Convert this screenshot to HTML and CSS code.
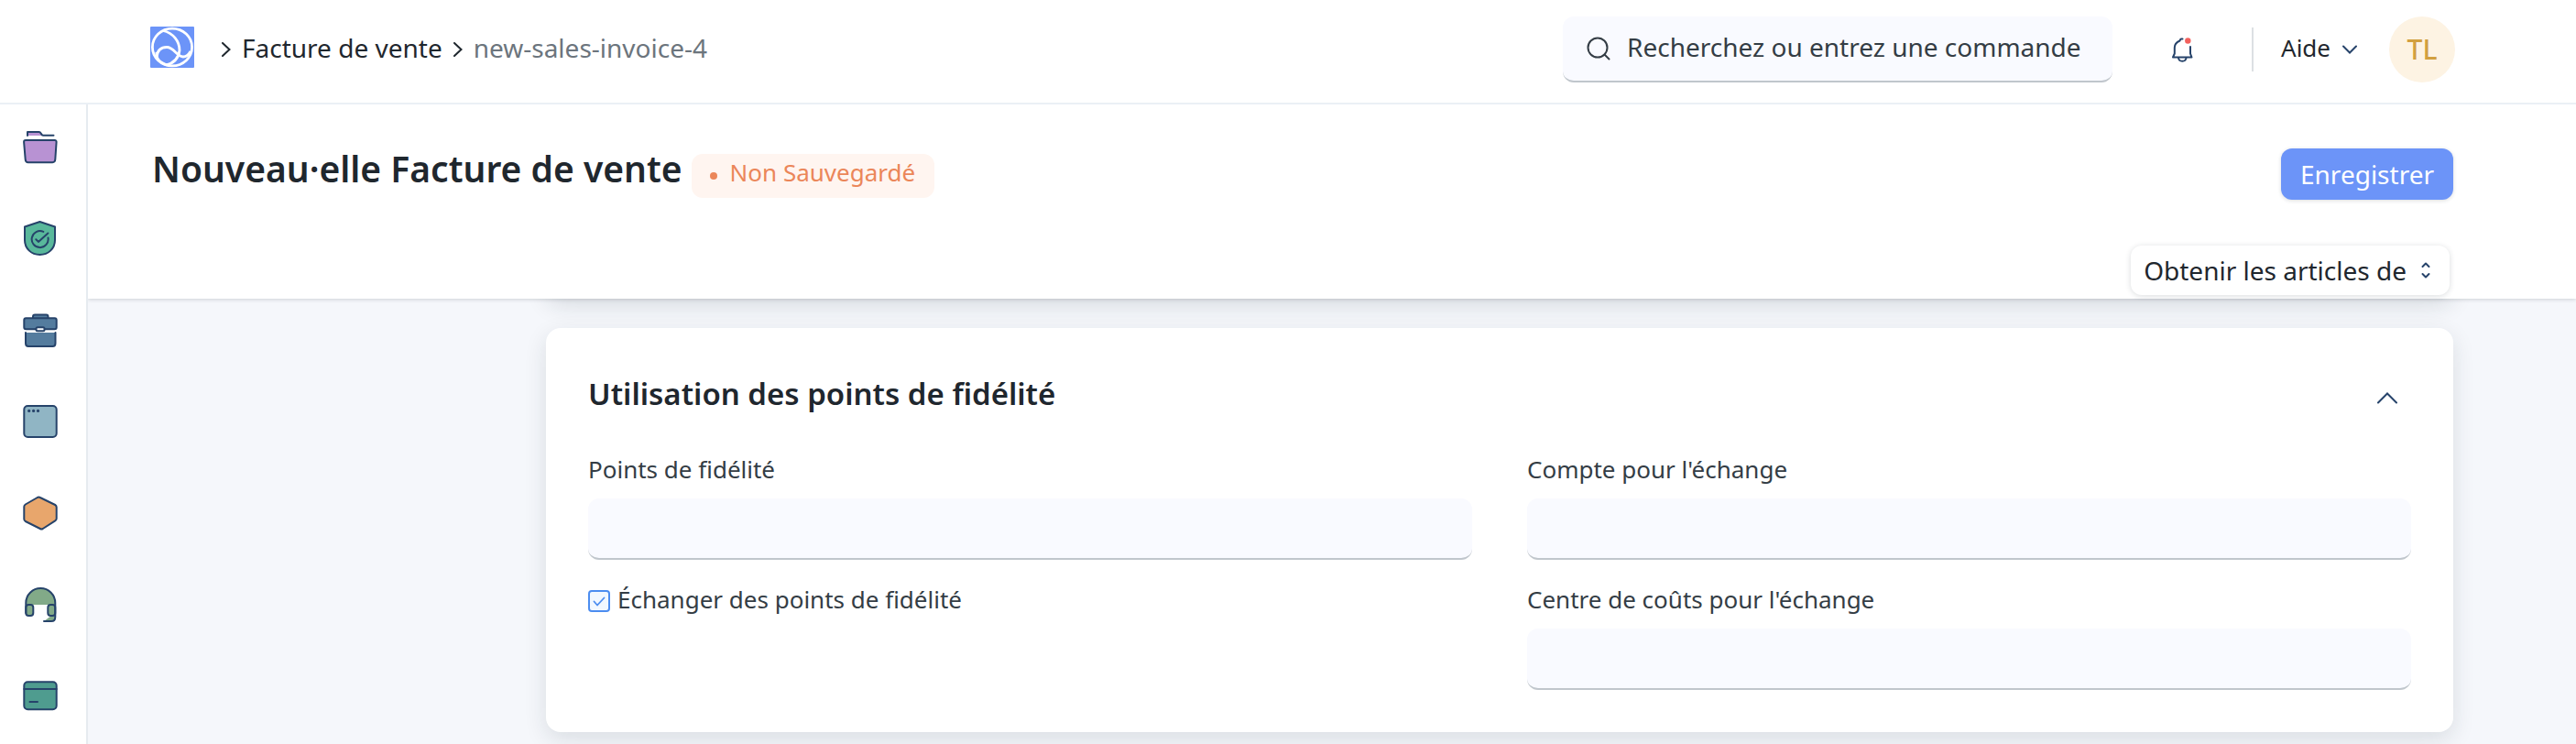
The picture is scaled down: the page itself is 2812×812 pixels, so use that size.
FILE: index.html
```html
<!DOCTYPE html>
<html lang="fr">
<head>
  <meta charset="utf-8">
  <meta name="viewport" content="width=device-width, initial-scale=1">
  <title>Nouveau·elle Facture de vente</title>
  <link rel="stylesheet" href="styles.css">
</head>
<body>
  <header class="navbar">
    <nav class="breadcrumb" aria-label="Fil d'Ariane">
      <a class="logo" href="#" aria-label="Accueil">
        <svg width="48" height="45" viewBox="0 0 48 45" fill="none" stroke="#fff" stroke-width="2.8">
          <rect width="48" height="45" rx="1" fill="#6c94f8" stroke="none"/>
          <ellipse cx="24" cy="22.5" rx="21.6" ry="20.4"/>
          <path d="M14 4.5C25 7 32 16 32 26C31 34 26 40 17 42"/>
          <path d="M7 33C8 25 13 22.500 18 22.500C26 22.500 29 33 36 33C40 33 42 30.500 44 27"/>
          <path d="M7 28C6 34 9 39 19 42"/>
        </svg>
      </a>
      <svg class="crumb-sep" width="10" height="16" viewBox="0 0 10 16"><path d="M1 1l7.500 7L1 15"/></svg>
      <a class="crumb" href="#">Facture de vente</a>
      <svg class="crumb-sep" width="10" height="16" viewBox="0 0 10 16"><path d="M1 1l7.500 7L1 15"/></svg>
      <a class="crumb crumb-current" href="#" aria-current="page">new-sales-invoice-4</a>
    </nav>
    <div class="navbar-tools">
      <div class="search">
        <svg width="26" height="26" viewBox="0 0 26 26" fill="none" stroke="#343d45" stroke-width="2" stroke-linecap="round"><circle cx="12" cy="12" r="10.500"/><path d="M19.500 19.500l5 5"/></svg>
        <input class="search-input" type="text" aria-label="Recherche" placeholder="Recherchez ou entrez une commande">
      </div>
      <button class="icon-button bell" type="button" aria-label="Notifications">
        <svg width="32" height="32" viewBox="0 0 32 32" fill="none" stroke="#26436a" stroke-width="2" stroke-linecap="round" stroke-linejoin="round">
          <path d="M18.500 4.500H17c-1 0-1 1-1.500 2C12 8 9.800 10.500 9.800 14v6.500L8 24.500h20.500L27 20.500v-7.500"/>
          <path d="M14 25c.5 5 8 5 8.500 0"/>
          <circle cx="24.300" cy="6.500" r="3.200" fill="#f2605c" stroke="none"/>
        </svg>
      </button>
      <span class="divider"></span>
      <button class="help" type="button">
        <span class="help-label">Aide</span>
        <svg width="18" height="12" viewBox="0 0 18 12" fill="none" stroke="#26436a" stroke-width="2" stroke-linecap="round"><path d="M2 2.500l7 7 7-7"/></svg>
      </button>
      <button class="avatar" type="button">TL</button>
    </div>
  </header>

  <div class="layout">
    <nav class="sidebar" aria-label="Modules">
      <a class="module" href="#" aria-label="Projets">
        <svg width="40" height="40" viewBox="0 0 40 40" class="glyph">
          <path fill="#b892d3" stroke="none" d="M6 8V4h13.700l2.600 4z"/>
          <path fill="none" d="M6 8V4h12.500c1.200 0 1.700.6 2.300 1.700.6 1.200 1 2 2.200 2h11.500"/>
          <path fill="#b892d3" d="M4 13h31.700c1.400 0 2 .8 1.900 2L36.300 34c-.1 2-1 3.200-3 3.200H6.700c-2 0-2.900-1.200-3-3.200L2.100 15c-.1-1.200.6-2 1.900-2z"/>
        </svg>
      </a>
      <a class="module" href="#" aria-label="Qualité">
        <svg width="40" height="40" viewBox="0 0 40 40" class="glyph">
          <path fill="#59b89b" d="M19.500 2L36 7.500V22c0 9-7 16-16.500 16S3 31 3 22V7.500z"/>
          <path fill="none" d="M23.300 12.900a9 9 0 1 0 5.200 6.600M15.300 21.300l2.600 2.600 10.500-9.400"/>
        </svg>
      </a>
      <a class="module" href="#" aria-label="Comptabilité">
        <svg width="40" height="40" viewBox="0 0 40 40" class="glyph" fill="#547c9e">
          <path d="M12 7V5.500c0-1.300.7-2 2-2h12.500c1.300 0 2 .7 2 2V7"/>
          <rect x="2.300" y="7.300" width="35.400" height="12" rx="2"/>
          <path stroke="none" d="M4 23h32.500v12c0 2-1 3-3 3H7c-2 0-3-1-3-3z"/>
          <path d="M4 23v11.500C4 37 5 38 7 38h26.500c2 0 3-1 3-3.500V23"/>
          <rect x="15.500" y="17.300" width="9" height="4" rx="1.500" fill="#fff"/>
        </svg>
      </a>
      <a class="module" href="#" aria-label="Site web">
        <svg width="40" height="40" viewBox="0 0 40 40" class="glyph">
          <rect x="2.300" y="3" width="35.400" height="34" rx="4" fill="#90b5c4"/>
          <g fill="#26436a" stroke="none"><circle cx="7.700" cy="8.400" r="1.600"/><circle cx="12.600" cy="8.400" r="1.600"/><circle cx="17.500" cy="8.400" r="1.600"/></g>
        </svg>
      </a>
      <a class="module" href="#" aria-label="Stock">
        <svg width="40" height="40" viewBox="0 0 40 40" class="glyph">
          <path fill="#e8a66c" d="M16.800 3q1.500-.8 3 0L36.200 11q1.500.8 1.500 2.500V26q0 1.500-1.500 2.300L22.800 37q-1.500.8-3 0L3.800 29Q2.300 28 2.300 26.500V13q0-1.500 1.500-2.500z"/>
        </svg>
      </a>
      <a class="module" href="#" aria-label="Assistance">
        <svg width="40" height="40" viewBox="0 0 40 40" class="glyph" fill="#82aa88">
          <path stroke="none" d="M4.300 20v-2a16 16 0 0 1 32 0v2z"/>
          <path stroke="none" d="M24 38l8-6h4v2c0 3-1 4-4 4z"/>
          <rect x="4.300" y="20" width="8" height="12" rx="3"/>
          <rect x="28.300" y="20" width="8" height="12" rx="3"/>
          <path fill="none" d="M4.300 29V18a16 16 0 0 1 32 0v15.500c0 3-1.300 4.500-4.300 4.500h-8"/>
        </svg>
      </a>
      <a class="module" href="#" aria-label="Paie">
        <svg width="40" height="40" viewBox="0 0 40 40" class="glyph">
          <rect x="2.300" y="4.300" width="35.400" height="30" rx="4" fill="#4f9c8f"/>
          <path d="M2.300 12h35.400M8.500 26h8.500"/>
        </svg>
      </a>
    </nav>

    <div class="page">
      <div class="page-head">
        <div class="head-row">
          <h1 class="page-title">Nouveau·elle Facture de vente</h1>
          <span class="status"><span class="status-text">Non Sauvegardé</span></span>
          <button class="button-primary" type="button">Enregistrer</button>
        </div>
        <div class="head-row head-actions">
          <button class="button-menu" type="button">
            <span>Obtenir les articles de</span>
            <svg width="10" height="18" viewBox="0 0 10 18" fill="none" stroke="#26436a" stroke-width="2" stroke-linecap="round" stroke-linejoin="round"><path d="M1.500 5L5 1.500 8.500 5M1.500 13L5 16.500 8.500 13"/></svg>
          </button>
        </div>
      </div>

      <main class="form">
        <section class="card card-scrolled"></section>
        <section class="card">
          <div class="card-head">
            <h2 class="card-title">Utilisation des points de fidélité</h2>
            <button class="icon-button" type="button" aria-label="Replier">
              <svg width="22" height="14" viewBox="0 0 22 14" fill="none" stroke="#26436a" stroke-width="2" stroke-linecap="round"><path d="M1 12.500L11 2.500l10 10"/></svg>
            </button>
          </div>
          <div class="columns">
            <div class="column">
              <div class="field">
                <label class="field-label" for="points">Points de fidélité</label>
                <input class="field-input" id="points" type="text">
              </div>
              <label class="check"><input class="check-box" type="checkbox" checked><span class="check-text">Échanger des points de fidélité</span></label>
            </div>
            <div class="column">
              <div class="field">
                <label class="field-label" for="account">Compte pour l'échange</label>
                <input class="field-input" id="account" type="text">
              </div>
              <div class="field">
                <label class="field-label" for="center">Centre de coûts pour l'échange</label>
                <input class="field-input" id="center" type="text">
              </div>
            </div>
          </div>
        </section>
      </main>
    </div>
  </div>
</body>
</html>
```
FILE: styles.css
```css
* {
  box-sizing: border-box;
}

body {
  margin: 0;
  min-height: 100vh;
  display: flex;
  flex-direction: column;
  overflow: hidden;
  background: #f5f7fb;
  color: #1f272e;
  font: 28px/40px "Noto Sans", "Open Sans", sans-serif;
}

button,
input {
  margin: 0;
  padding: 0;
  border: 0;
  background: none;
  color: inherit;
  font: inherit;
}

button {
  cursor: pointer;
}

a {
  color: inherit;
  text-decoration: none;
}

h1,
h2 {
  margin: 0;
  font-weight: 600;
}

svg {
  display: block;
  flex: none;
}

/* Top bar */
.navbar {
  display: flex;
  align-items: center;
  justify-content: space-between;
  padding: 18px 132px 22px 164px;
  border-bottom: 2px solid #ebf0f5;
  background: #fff;
}

.breadcrumb {
  display: flex;
  align-items: center;
  gap: 12px;
}

.logo {
  margin-right: 18px;
  padding-bottom: 6px;
}

.crumb-sep {
  fill: none;
  stroke: #1f272e;
  stroke-width: 2;
  stroke-linecap: round;
}

.crumb {
  padding-bottom: 4px;
}

.crumb-current {
  color: #6c757d;
}

.navbar-tools {
  display: flex;
  align-items: center;
}

.search {
  display: flex;
  align-items: center;
  gap: 18px;
  width: 600px;
  height: 72px;
  padding: 0 24px 0 26px;
  border-bottom: 2px solid #c0c6cc;
  border-radius: 12px;
  background: #f9faff;
}

.search-input {
  flex: 1;
  min-width: 0;
  padding-bottom: 4px;
  outline: none;
}

.search-input::placeholder {
  color: #343d45;
  opacity: 1;
}

.icon-button {
  display: flex;
}

.bell {
  margin: 0 62px 0 58px;
}

.divider {
  width: 2px;
  height: 48px;
  background: #dce0e3;
}

.help {
  display: flex;
  align-items: center;
  gap: 12px;
  margin: 0 34px 0 30px;
  font-size: 26px;
}

.help-label {
  padding-bottom: 4px;
}

.avatar {
  width: 72px;
  height: 72px;
  border-radius: 50%;
  background: #fdf3e3;
  color: #d2a040;
  font-size: 30px;
  font-weight: 500;
}

/* Module rail */
.layout {
  flex: 1;
  display: flex;
}

.sidebar {
  display: flex;
  flex-direction: column;
  gap: 60px;
  padding: 26px 30px 0 24px;
  border-right: 2px solid #e6ebf0;
  background: #fff;
}

.glyph {
  stroke: #26436a;
  stroke-width: 2;
  stroke-linecap: round;
  stroke-linejoin: round;
}

.page {
  flex: 1;
  min-width: 0;
}

/* Document header */
.page-head {
  position: relative;
  z-index: 1;
  display: flex;
  flex-direction: column;
  gap: 50px;
  padding: 48px 134px 4px 70px;
  background: #fff;
  box-shadow: 0 1px 4px rgba(25, 39, 52, 0.18);
  clip-path: inset(0 0 -12px 0);
}

.head-row {
  display: flex;
  align-items: center;
}

.page-title {
  padding-bottom: 12px;
  font-size: 39px;
  line-height: 44px;
}

.status {
  display: flex;
  align-items: center;
  gap: 14px;
  height: 48px;
  margin: 4px 0 0 10px;
  padding: 0 21px 0 20px;
  border-radius: 12px;
  background: #fff5f0;
  color: #eb8659;
  font-size: 26px;
}

.status::before {
  content: "";
  width: 8px;
  height: 8px;
  border-radius: 50%;
  background: currentColor;
}

.status-text {
  padding-bottom: 8px;
}

.button-primary {
  height: 56px;
  margin-left: auto;
  padding: 0 21px;
  border-radius: 12px;
  background: #6c94f8;
  box-shadow: 0 1px 4px rgba(25, 39, 52, 0.16);
  color: #fff;
}

.head-actions {
  justify-content: flex-end;
  padding-right: 4px;
}

.button-menu {
  display: flex;
  align-items: center;
  gap: 16px;
  height: 54px;
  padding: 0 21px 0 14px;
  border-radius: 12px;
  background: #fff;
  box-shadow: 0 1px 6px rgba(25, 39, 52, 0.16);
}

/* Form */
.form {
  display: flex;
  flex-direction: column;
  gap: 32px;
  padding: 0 134px 32px 500px;
}

.card {
  padding: 50px 46px 46px;
  border-radius: 16px;
  background: #fff;
  box-shadow: 0 8px 24px rgba(25, 39, 52, 0.12);
}

.card-scrolled {
  margin-top: -96px;
}

.card-head {
  display: flex;
  align-items: center;
  justify-content: space-between;
  padding-right: 15px;
  margin-bottom: 42px;
}

.card-title {
  font-size: 33px;
  line-height: 44px;
}

.card-head .icon-button {
  padding-top: 8px;
}

.columns {
  display: grid;
  grid-template-columns: 1fr 1fr;
  gap: 60px;
  color: #343d45;
  font-size: 26px;
  line-height: 36px;
}

.column {
  display: flex;
  flex-direction: column;
  gap: 25px;
}

.field {
  display: flex;
  flex-direction: column;
  gap: 14px;
}

.field-input {
  width: 100%;
  height: 67px;
  padding: 0 20px;
  border-bottom: 2px solid #c0c6cc;
  border-radius: 12px;
  background: #f9faff;
}

.check {
  display: flex;
  align-items: center;
  gap: 8px;
}

.check-box {
  appearance: none;
  width: 24px;
  height: 24px;
  border: 2px solid #4c8df0;
  border-radius: 4px;
  background: #f2f8ff url("data:image/svg+xml,%3Csvg xmlns='http://www.w3.org/2000/svg' viewBox='0 0 20 20' fill='none' stroke='%234c8df0' stroke-width='1.800' stroke-linecap='round' stroke-linejoin='round'%3E%3Cpath d='M4.500 10.500l3.500 4 7.500-8'/%3E%3C/svg%3E") center / 20px 20px no-repeat;
}

.check-text {
  padding-bottom: 4px;
}
```
